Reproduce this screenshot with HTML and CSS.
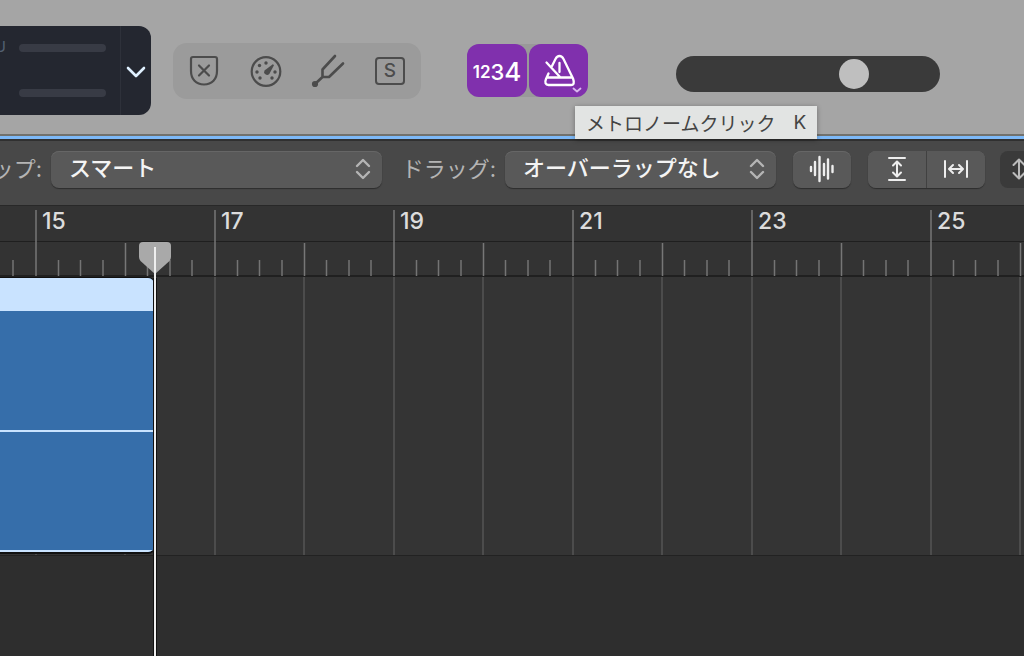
FILE: index.html
```html
<!DOCTYPE html>
<html lang="ja">
<head>
<meta charset="utf-8">
<title>トラック</title>
<link rel="stylesheet" href="styles.css">
</head>
<body>
<svg class="defs" aria-hidden="true">
  <symbol id="updown" viewBox="0 0 16 24">
    <path d="M2 9l6-6 6 6M2 15l6 6 6-6" fill="none" stroke="currentColor" stroke-width="2.4" stroke-linecap="round" stroke-linejoin="round"/>
  </symbol>
  <symbol id="bars" viewBox="0 0 179 66">
    <path d="M1 0V66M90.500 33V66" stroke="#777" stroke-width="1.500"/>
    <path d="M23.500 50V66M45.500 50V66M68 50V66M112.500 50V66M135 50V66M157 50V66" stroke="#747474" stroke-width="1.500"/>
  </symbol>
</svg>

<header class="control-bar">
  <div class="lcd">
    <div class="lcd-name">U</div>
    <div class="meters"><span class="meter"></span><span class="meter"></span></div>
    <button class="lcd-menu" aria-label="表示メニュー">
      <svg width="20" height="14" viewBox="0 0 20 14"><path d="M2 3l8 8 8-8" fill="none" stroke="#dff0ff" stroke-width="2.6" stroke-linecap="round" stroke-linejoin="round"/></svg>
    </button>
  </div>

  <div class="modes">
    <button aria-label="置き換え">
      <svg width="32" height="32" viewBox="0 0 32 32" fill="none" stroke="currentColor" stroke-width="2.200" stroke-linecap="round"><path d="M5 2h22q2 0 2 2v12c0 8-5 13.500-13 13.500S3 24 3 16V4q0-2 2-2zM11 10.500l10 10M21 10.500l-10 10"/></svg>
    </button>
    <button aria-label="低レイテンシー">
      <svg width="32" height="32" viewBox="0 0 32 32"><circle cx="16" cy="16.500" r="14.300" fill="none" stroke="currentColor" stroke-width="2.200"/><path d="M22.800 9.200q1.200.2 1 1.300l-4.500 8.500a3 3 0 0 1-4.800-3.500z" fill="currentColor"/><g fill="currentColor"><circle cx="16" cy="8" r="1.700"/><circle cx="9.500" cy="10.500" r="1.700"/><circle cx="7" cy="17" r="1.700"/><circle cx="10" cy="23" r="1.700"/><circle cx="22" cy="23" r="1.700"/><circle cx="25" cy="17" r="1.700"/></g></svg>
    </button>
    <button aria-label="チューナー">
      <svg width="34" height="34" viewBox="0 0 34 34" fill="none" stroke="currentColor" stroke-width="2.600" stroke-linecap="round" stroke-linejoin="round"><path d="M24 2L11.500 15.500V23H18L32 9.500M11.500 23L4 30"/><circle cx="4" cy="30" r="1.800" fill="currentColor"/></svg>
    </button>
    <button aria-label="ソロ"><span class="solo">S</span></button>
  </div>

  <div class="clicks">
    <button class="count" aria-label="カウントイン 1234"><span class="n1">1</span><span class="n2">2</span><span class="n3">3</span><span class="n4">4</span></button>
    <button class="metronome" aria-label="メトロノームクリック">
      <svg width="59" height="53" viewBox="0 0 59 53" fill="none" stroke="#fff" stroke-width="2.300" stroke-linecap="round" stroke-linejoin="round"><path d="M23 22l3.500-7c2-4 6-4 8 0l9.500 19.500c1.500 4 1 6.500-2 6.500H19.500c-3 0-4-2.500-2.500-6l2.500-5.500M18.500 33.500h24.500M17.500 18.500l13.500 14.500M30.500 19v9"/><path d="M44.500 44.500l3.500 3 3.500-3" stroke="#d9b8ee" stroke-width="1.800"/></svg>
    </button>
    <div class="tooltip" role="tooltip"><span>メトロノームクリック</span><kbd>K</kbd></div>
  </div>

  <input class="volume" type="range" min="0" max="100" value="70" aria-label="マスター音量">
</header>

<main class="tracks">
  <div class="toolbar">
    <label class="caption snap-caption" for="snap">ップ:</label>
    <div class="popup snap"><select id="snap"><option>スマート</option></select><svg width="16" height="24"><use href="#updown"/></svg></div>
    <label class="caption drag-caption" for="drag">ドラッグ:</label>
    <div class="popup drag"><select id="drag"><option>オーバーラップなし</option></select><svg width="16" height="24"><use href="#updown"/></svg></div>
    <button class="tool wave" aria-label="波形の拡大">
      <svg width="26" height="28" viewBox="0 0 26 28" stroke="currentColor" stroke-width="2.400" stroke-linecap="round"><path d="M2 12v4M6 7v13M10.500 2v24M15 9v11M19 4.500v19M23.500 11v6"/></svg>
    </button>
    <div class="zooms">
      <button class="tool" aria-label="縦方向の自動拡大">
        <svg width="20" height="26" viewBox="0 0 20 26" fill="none" stroke="currentColor" stroke-width="2" stroke-linecap="round" stroke-linejoin="round"><path d="M2 2h16M2 24h16M10 6v14M6 9.500L10 5.500l4 4M6 16.500l4 4 4-4"/></svg>
      </button>
      <button class="tool" aria-label="横方向に合わせる">
        <svg width="26" height="20" viewBox="0 0 26 20" fill="none" stroke="currentColor" stroke-width="2" stroke-linecap="round" stroke-linejoin="round"><path d="M2 2v16M24 2v16M6.500 10h13M10 6l-4 4 4 4M16 6l4 4-4 4"/></svg>
      </button>
    </div>
    <button class="tool vertical" aria-label="縦方向の拡大">
      <svg width="16" height="22" viewBox="0 0 16 22" fill="none" stroke="currentColor" stroke-width="2" stroke-linecap="round" stroke-linejoin="round"><path d="M8 2v18M2.500 7L8 1.500 13.500 7M2.500 15L8 20.500l5.500-5.500"/></svg>
    </button>
  </div>

  <div class="timeline">
    <div class="ruler">
      <div class="measure"><svg width="179" height="66"><use href="#bars"/></svg></div>
      <div class="measure"><svg width="179" height="66"><use href="#bars"/></svg><span>15</span></div>
      <div class="measure"><svg width="179" height="66"><use href="#bars"/></svg><span>17</span></div>
      <div class="measure"><svg width="179" height="66"><use href="#bars"/></svg><span>19</span></div>
      <div class="measure"><svg width="179" height="66"><use href="#bars"/></svg><span>21</span></div>
      <div class="measure"><svg width="179" height="66"><use href="#bars"/></svg><span>23</span></div>
      <div class="measure"><svg width="179" height="66"><use href="#bars"/></svg><span>25</span></div>
    </div>
    <div class="lane">
      <div class="region"><div class="region-head"></div><div class="channel"></div><div class="channel"></div></div>
    </div>
    <div class="playhead">
      <svg width="34" height="34" viewBox="0 0 34 34"><path d="M5 1h24q4 0 4 4v11q0 2-1.500 4L17 33 2.500 20Q1 18 1 16V5q0-4 4-4z" fill="#a9a9a9"/></svg>
    </div>
  </div>
</main>
</body>
</html>
```

FILE: styles.css
```css
* { box-sizing: border-box; }

body {
  margin: 0;
  min-height: 100vh;
  display: flex;
  flex-direction: column;
  overflow: hidden;
  background: #2e2e2e;
  font-family: Inter, "Noto Sans CJK JP", sans-serif;
}

button {
  display: flex;
  align-items: center;
  justify-content: center;
  margin: 0;
  padding: 0;
  border: 0;
  background: none;
  color: inherit;
  font: inherit;
}

svg { display: block; flex: none; }
.defs { position: absolute; width: 0; height: 0; }

/* Control bar */
.control-bar {
  flex: none;
  display: flex;
  align-items: center;
  height: 136px;
  padding-top: 7px;
  background: #a5a5a5;
  border-bottom: 2px solid #71716d;
}

.lcd {
  flex: none;
  display: flex;
  width: 151px;
  height: 89px;
  border-radius: 0 12px 12px 0;
  background: #242730;
  overflow: hidden;
}
.lcd-name {
  display: flex;
  justify-content: flex-end;
  width: 6px;
  padding-top: 12px;
  color: #536073;
  font-size: 15px;
  line-height: 18px;
}
.meters {
  flex: 1;
  display: flex;
  flex-direction: column;
  justify-content: space-between;
  padding: 18px 14px 18px 13px;
}
.meter { height: 8px; border-radius: 4px; background: #383b45; }
.lcd-menu { width: 31px; padding-top: 3px; border-left: 1px solid #2e313a; }

.modes {
  flex: none;
  display: flex;
  height: 56px;
  margin-left: 22px;
  border-radius: 14px;
  background: #9b9b9b;
  color: #4c4c4c;
}
.modes button { width: 62px; }
.solo {
  display: flex;
  align-items: center;
  justify-content: center;
  width: 30px;
  height: 28px;
  border: 2px solid currentColor;
  border-radius: 4px;
  font-size: 19px;
  font-weight: 500;
}

.clicks {
  position: relative;
  flex: none;
  display: flex;
  gap: 2px;
  margin-left: 46px;
  border-radius: 12px;
  background: #999;
}
.count, .metronome {
  height: 53px;
  border-radius: 12px;
  background: #8030ad;
  color: #fff;
}
.count { width: 60px; padding-top: 2px; font-weight: 500; }
.metronome { width: 59px; }
.n1, .n2 { font-size: 17px; font-weight: 600; }
.n3 { font-size: 22px; }
.n4 { font-size: 26px; }

.tooltip {
  position: absolute;
  z-index: 3;
  top: 62px;
  left: 108px;
  display: flex;
  align-items: center;
  gap: 18px;
  height: 33px;
  padding: 0 11px;
  background: #e2e4e3;
  box-shadow: 0 1px 5px #0005;
  color: #444;
  font-size: 19px;
  white-space: nowrap;
}
.tooltip kbd { font: inherit; }

.volume {
  appearance: none;
  flex: none;
  width: 264px;
  height: 36px;
  margin: 7px 0 0 88px;
  padding: 3px;
  border-radius: 18px;
  background: #3a3a3a;
}
.volume::-webkit-slider-thumb {
  appearance: none;
  width: 30px;
  height: 30px;
  border-radius: 50%;
  background: #bfbfbf;
}

/* Track area */
.tracks {
  flex: 1;
  display: flex;
  flex-direction: column;
  border-top: 3px solid #7db9f8;
}
.toolbar {
  flex: none;
  display: flex;
  align-items: center;
  height: 66px;
  padding-bottom: 8px;
  border-top: 2px solid #303030;
  background: #484848;
  overflow: hidden;
}
.caption {
  flex: none;
  display: flex;
  justify-content: flex-end;
  padding-bottom: 4px;
  color: #b4b4b4;
  font-size: 22px;
  white-space: nowrap;
}
.snap-caption { width: 42px; }
.drag-caption { width: 114px; }
.popup {
  flex: none;
  display: grid;
  align-items: center;
  height: 37px;
  margin-left: 9px;
  border-radius: 8px;
  background: #595959;
  box-shadow: 0 1px 1px #2d2d2d, inset 0 1px 0 #666;
}
.popup select, .popup svg { grid-area: 1 / 1; }
.popup select {
  appearance: none;
  width: 100%;
  height: 37px;
  margin: 0;
  padding: 0 40px 2px 18px;
  border: 0;
  background: none;
  color: #f4f4f4;
  font: 500 22px Inter, "Noto Sans CJK JP", sans-serif;
}
.popup svg { justify-self: end; margin-right: 11px; color: #b5b5b5; pointer-events: none; }
.snap { width: 331px; }
.drag { width: 271px; }

.tool {
  width: 58px;
  height: 37px;
  background: #595959;
  color: #eee;
}
.wave, .zooms, .vertical { flex: none; border-radius: 8px; box-shadow: 0 1px 1px #2d2d2d, inset 0 1px 0 #666; }
.wave { margin-left: 17px; }
.zooms { display: flex; margin-left: 17px; overflow: hidden; }
.zooms .tool + .tool { width: 59px; border-left: 1px solid #414141; }
.vertical { margin-left: 15px; background: #3a3a3a; color: #bbb; box-shadow: none; width: 38px; }

.timeline {
  position: relative;
  flex: 1;
  overflow: hidden;
}
.ruler {
  display: flex;
  height: 72px;
  padding-top: 4px;
  border-top: 1px solid #282828;
  border-bottom: 2px solid #202020;
  background: linear-gradient(#1f1f1f, #1f1f1f) 0 31px / 100% 1px no-repeat content-box, #333;
}
.measure {
  flex: none;
  display: grid;
  width: 179px;
  color: #dcdcdc;
  font-size: 23px;
  font-weight: 500;
  line-height: 22px;
}
.measure:first-child { margin-left: -144px; }
.measure svg, .measure span { grid-area: 1 / 1; }
.measure span { padding-left: 7px; }

.lane {
  height: 279px;
  border-bottom: 1px solid #222;
  background:
    repeating-linear-gradient(90deg, #4c4c4c 0 2px, transparent 2px 89px, #4c4c4c 89px 91px, transparent 91px 179px) -144px 0 / 1432px 100%,
    #343434;
}
.region {
  display: flex;
  flex-direction: column;
  width: 155px;
  height: 277px;
  border: solid #111;
  border-width: 1px 1px 2px 0;
  border-radius: 0 7px 7px 0;
  background: #366eaa;
  overflow: hidden;
}
.region-head { height: 33px; background: #c9e3ff; }
.channel { flex: 1; border-bottom: 2px solid #c9e3ff; }

.playhead {
  position: absolute;
  top: 36px;
  left: 138px;
  bottom: 0;
  width: 34px;
}
.playhead::after {
  content: "";
  position: absolute;
  top: 6px;
  bottom: 0;
  left: 16px;
  width: 2px;
  background: #eee;
  box-shadow: 0 32px 0 1px #111;
}
```
